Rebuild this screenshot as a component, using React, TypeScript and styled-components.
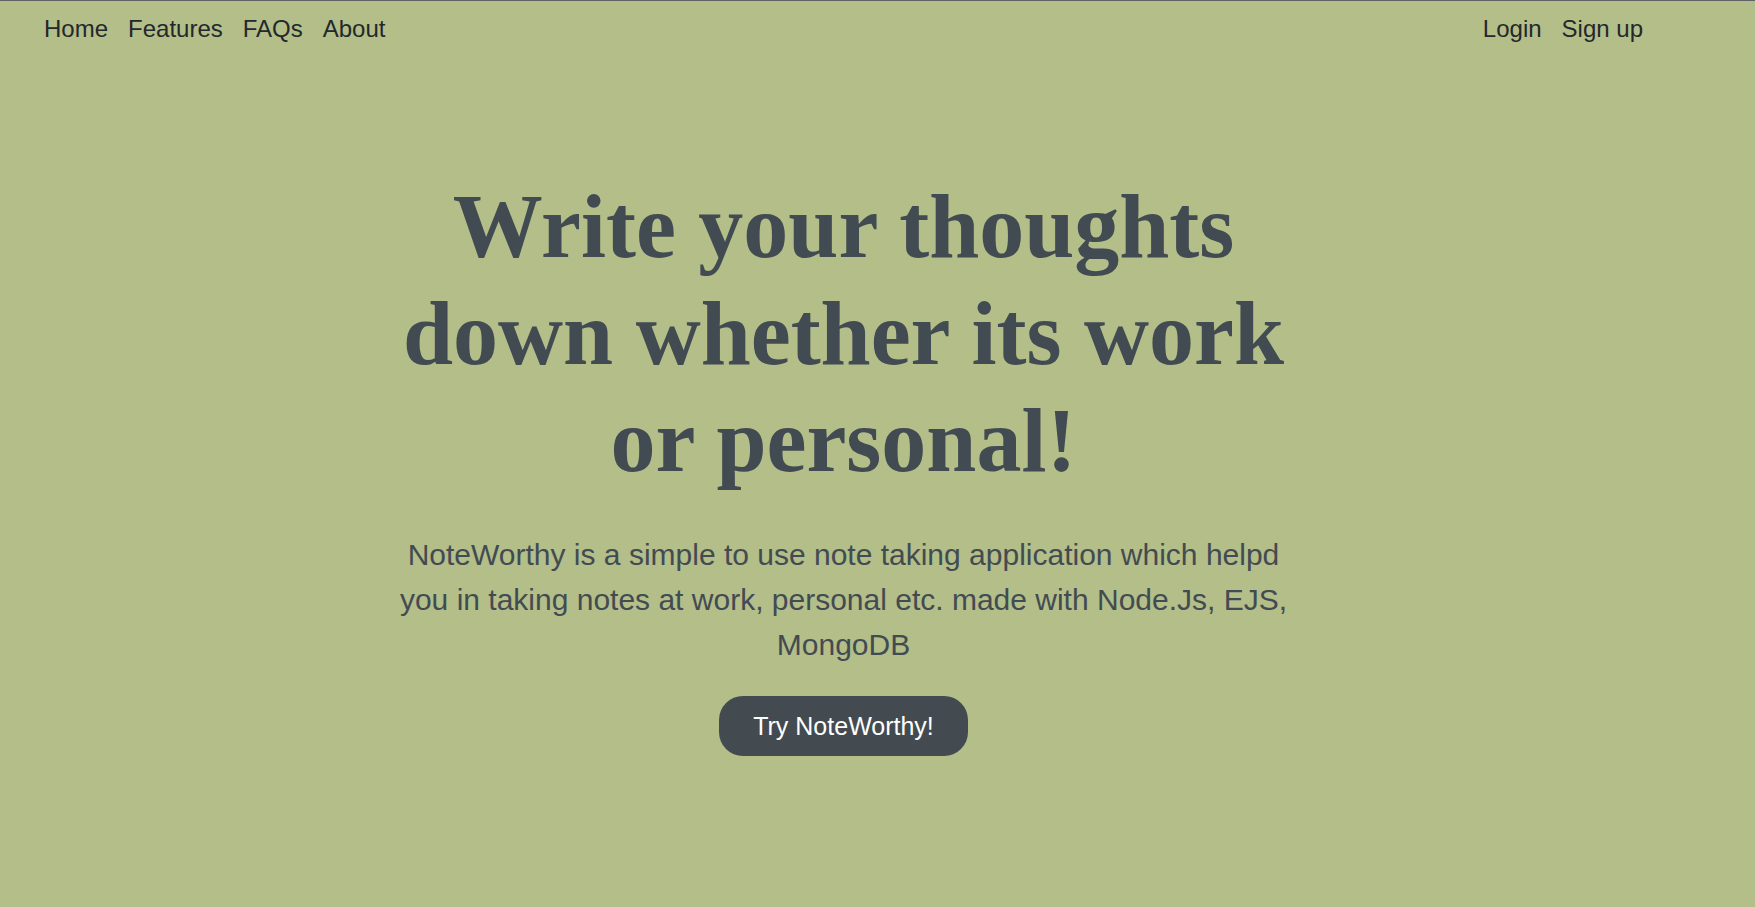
import React from "react";
import styled, { createGlobalStyle } from "styled-components";

const Global = createGlobalStyle`
  html, body {
    margin: 0;
    padding: 0;
    background: #b3be89;
  }
  body {
    font-family: "Liberation Sans", Arial, sans-serif;
    min-height: 907px;
  }
`;

const Page = styled.div`
  min-height: 907px;
  box-sizing: border-box;
  border-top: 1px solid #5f6368;
  background: #b3be89;
`;

const Nav = styled.nav`
  display: flex;
  justify-content: space-between;
  align-items: center;
  height: 55px;
  padding: 0 112px 0 44px;
`;

const NavGroup = styled.div`
  display: flex;
  gap: 20px;
`;

const NavLink = styled.a`
  font-family: "Liberation Sans", Arial, sans-serif;
  font-size: 24px;
  color: #23282c;
  text-decoration: none;
  cursor: pointer;
`;

const Hero = styled.main`
  display: flex;
  flex-direction: column;
  align-items: center;
  padding: 117px 68px 0 0;
`;

const Inner = styled.div`
  width: 900px;
  display: flex;
  flex-direction: column;
  align-items: center;
  text-align: center;
`;

const Title = styled.h1`
  margin: 0;
  font-family: "Liberation Serif", "Times New Roman", serif;
  font-weight: 700;
  font-size: 90px;
  line-height: 107px;
  color: #434b52;
`;

const Lead = styled.p`
  margin: 38px 0 0;
  font-family: "Liberation Sans", Arial, sans-serif;
  font-size: 30px;
  line-height: 45px;
  color: #434b52;
`;

const Cta = styled.button`
  margin-top: 29px;
  height: 60px;
  padding: 0 34px;
  border: none;
  border-radius: 24px;
  background: #434b51;
  color: #ffffff;
  font-family: "Liberation Sans", Arial, sans-serif;
  font-size: 25px;
  cursor: pointer;
`;

export default function App() {
  return (
    <Page>
      <Global />
      <Nav>
        <NavGroup>
          <NavLink>Home</NavLink>
          <NavLink>Features</NavLink>
          <NavLink>FAQs</NavLink>
          <NavLink>About</NavLink>
        </NavGroup>
        <NavGroup>
          <NavLink>Login</NavLink>
          <NavLink>Sign up</NavLink>
        </NavGroup>
      </Nav>
      <Hero>
        <Inner>
          <Title>Write your thoughts down whether its work or personal!</Title>
          <Lead>
            NoteWorthy is a simple to use note taking application which helpd
            you in taking notes at work, personal etc. made with Node.Js, EJS,
            MongoDB
          </Lead>
          <Cta>Try NoteWorthy!</Cta>
        </Inner>
      </Hero>
    </Page>
  );
}
